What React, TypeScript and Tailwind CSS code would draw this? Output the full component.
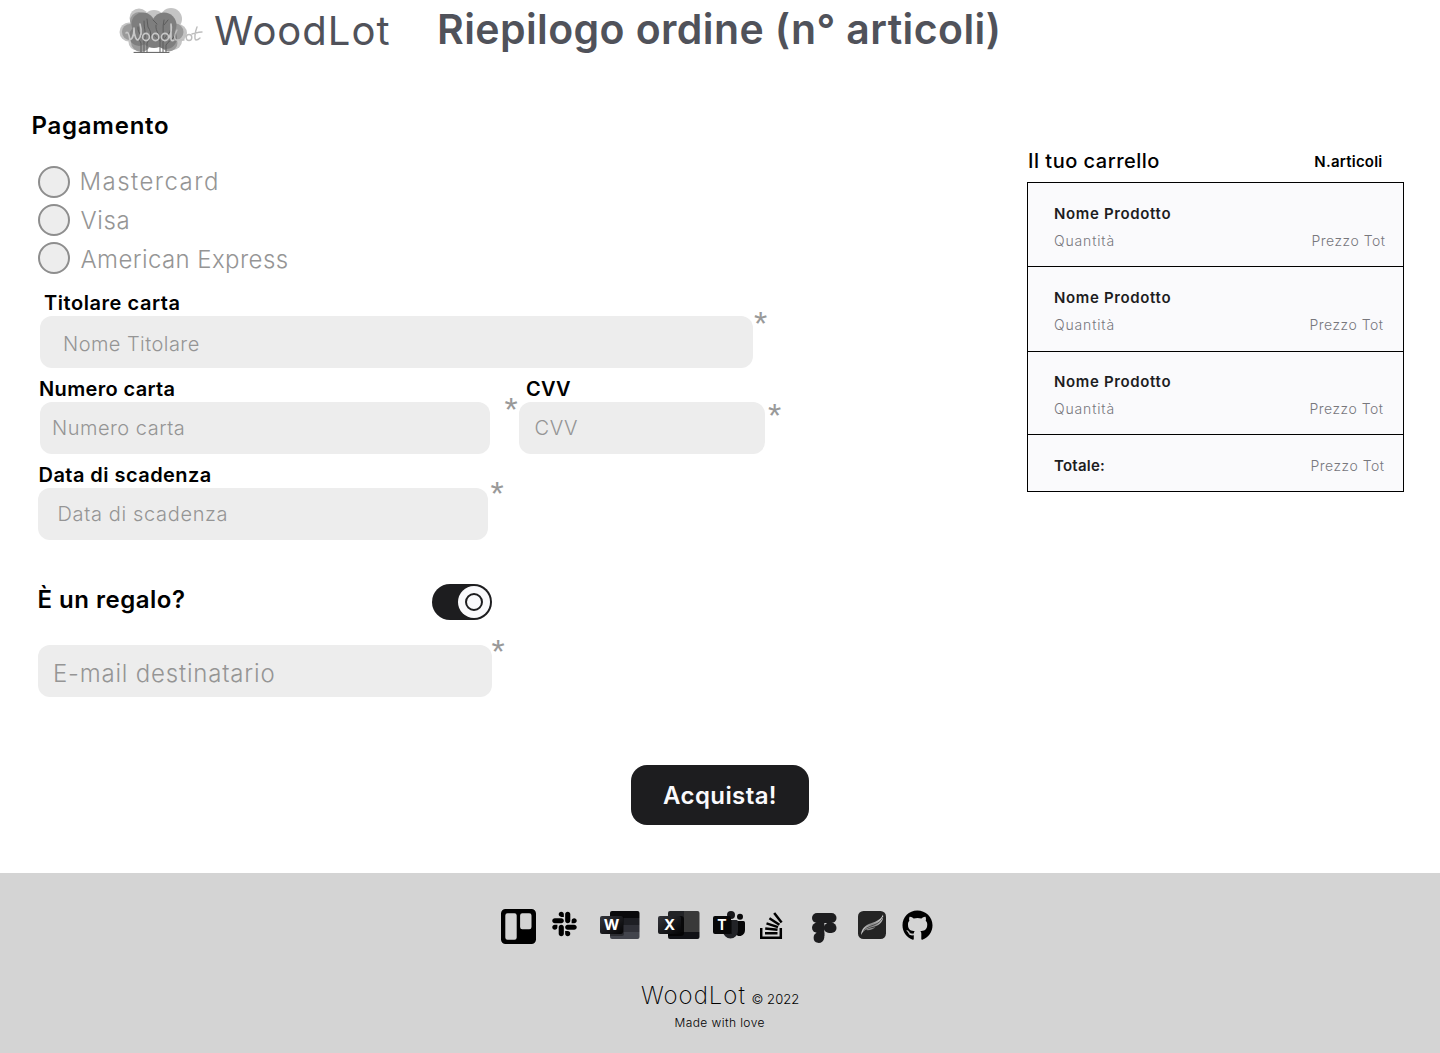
import type { ReactNode } from "react";
import { FaGithub, FaSlack } from "react-icons/fa";

function TreeLogo() {
  return (
    <svg width="90" height="52" viewBox="0 0 90 52" className="shrink-0">
      <g fill="#c4c4c4">
        <circle cx="22" cy="13" r="9.5" />
        <circle cx="54" cy="14" r="11" />
        <circle cx="12" cy="27" r="9.5" />
        <circle cx="61" cy="28" r="9" />
        <circle cx="20" cy="37" r="8.5" />
        <circle cx="56" cy="36" r="9" />
        <circle cx="37" cy="16" r="11" />
      </g>
      <g fill="#9a9a9a">
        <circle cx="13" cy="27" r="8" />
        <circle cx="22" cy="16" r="9" />
        <circle cx="58" cy="27" r="8.5" />
        <circle cx="24" cy="37" r="10" />
        <circle cx="52" cy="38" r="8.5" />
      </g>
      <g fill="#7e7e7e">
        <circle cx="26" cy="19" r="11.5" />
        <circle cx="47" cy="20" r="12.5" />
        <circle cx="22" cy="31" r="10" />
        <circle cx="37" cy="29" r="14" />
        <circle cx="49" cy="33" r="11" />
      </g>
      <g fill="none" stroke="#5c5c5c" strokeWidth="1" strokeLinecap="round">
        <path d="M27 47V36C27 31 20 29 21 22M27 36C30 30 27 25 27 16M24 47V38C23 34 18 33 16 29M30 47V38C33 34 36 29 31 22L30 14" />
        <path d="M43 47V36C44 30 38 27 39 20M46 47V37C48 31 54 29 54 22M49 47V40C51 36 56 35 58 30M43 36C41 33 38 32 37 29M46 34C47 28 45 23 47 15M40 19L36 15M47 20L51 15" />
        <path d="M17 47.4H52" />
      </g>
      <g fill="none" stroke="#c8c8c8" strokeWidth="1.6" strokeLinecap="round" strokeLinejoin="round">
        <path d="M9 28C11 26 12 29 13 35C16 34 17 27 17 23C17 30 19 35 21 35C24 32 25 26 23 19" />
        <ellipse cx="29" cy="32" rx="3.4" ry="3.600" />
        <ellipse cx="38.500" cy="32" rx="3.400" ry="3.600" />
        <ellipse cx="48" cy="32" rx="3.600" ry="3.600" />
        <path d="M52 33C54 29 55 24 54 19V34C54 36 56 36 57 35" />
      </g>
      <g fill="none" stroke="#bdbdbd" strokeWidth="1.4" strokeLinecap="round">
        <path d="M60 25C57 30 57 34 59 35H67" />
        <ellipse cx="72" cy="32.500" rx="2.800" ry="3" />
        <path d="M80 22C78 27 77 35 79 35C81 35 82 34 83 33M75 29C79 28 82 27 85 27" />
      </g>
    </svg>
  );
}

function TrelloIcon() {
  return (
    <svg width="35" height="35" viewBox="0 0 35 35">
      <path
        fillRule="evenodd"
        d="M4.5 0h26A4.5 4.5 0 0 1 35 4.500v26a4.500 4.500 0 0 1-4.500 4.500h-26A4.500 4.500 0 0 1 0 30.500v-26A4.500 4.500 0 0 1 4.500 0zM6.500 4.300a2.200 2.200 0 0 0-2.200 2.200v22a2.200 2.200 0 0 0 2.200 2.200h7a2.200 2.200 0 0 0 2.200-2.200v-22a2.200 2.200 0 0 0-2.200-2.200zM21.300 4.300a2.200 2.200 0 0 0-2.200 2.200v11.500a2.200 2.200 0 0 0 2.200 2.200h7a2.200 2.200 0 0 0 2.200-2.200V6.500a2.200 2.200 0 0 0-2.200-2.200z"
      />
    </svg>
  );
}

function Tile({ letter }: { letter: string }) {
  return (
    <span className="absolute left-0 top-[5px] flex h-[18px] w-[23px] items-center justify-center rounded-[2px] bg-linear-to-br from-[#34353b] to-[#050506] pb-px text-[15px] leading-none font-bold text-white">
      {letter}
    </span>
  );
}

function WordIcon() {
  return (
    <div className="relative h-7 w-10">
      <svg width="40" height="28" viewBox="0 0 40 28">
        <path d="M12 0h25.500a2 2 0 0 1 2 2v5H10V2a2 2 0 0 1 2-2z" fill="#09090b" />
        <path d="M10 7h29.500v7H10z" fill="#1e1f24" />
        <path d="M10 14h29.500v7H10z" fill="#303138" />
        <path d="M10 21h29.500v5a2 2 0 0 1-2 2H12a2 2 0 0 1-2-2z" fill="#42444c" />
        <path d="M10 5h12a2 2 0 0 1 2 2v16a2 2 0 0 1-2 2H10z" fill="#000" opacity=".35" />
      </svg>
      <Tile letter="W" />
    </div>
  );
}

function ExcelIcon() {
  return (
    <div className="relative h-7 w-[42px]">
      <svg width="42" height="28" viewBox="0 0 42 28">
        <path d="M12 0h14v21H10V2a2 2 0 0 1 2-2z" fill="#222326" />
        <path d="M26 0h13.500a2 2 0 0 1 2 2v19H26z" fill="#3a3a3a" />
        <path d="M10 21h31.500v5a2 2 0 0 1-2 2H12a2 2 0 0 1-2-2z" fill="#111216" />
        <path d="M10 5h13a3 3 0 0 1 3 3v14a3 3 0 0 1-3 3H10z" fill="#000" opacity=".75" />
      </svg>
      <Tile letter="X" />
    </div>
  );
}

function TeamsIcon() {
  return (
    <div className="relative h-7 w-8">
      <svg width="32" height="28" viewBox="0 0 32 28">
        <circle cx="18" cy="4" r="4" fill="#17171a" />
        <circle cx="27" cy="5.800" r="3" fill="#09090a" />
        <path d="M21 10h9.500a1.500 1.500 0 0 1 1.500 1.500V19c0 3.500-2.500 6-5.500 6S21 22.500 21 19z" fill="#060607" />
        <path d="M10 9h13.500a1.500 1.500 0 0 1 1.500 1.500V20a7.500 7.500 0 0 1-15 0z" fill="#222327" />
        <path d="M10 9h9v14h-9z" fill="#000" opacity=".45" />
      </svg>
      <span className="absolute left-0 top-[5px] flex h-[18px] w-[18px] items-center justify-center rounded-[2px] bg-[#070708] pb-px text-sm leading-none font-bold text-white">
        T
      </span>
    </div>
  );
}

function StackIcon() {
  return (
    <svg width="23" height="28" viewBox="0 0 23 28" fill="none" stroke="#000" strokeWidth="2.500">
      <path d="M1.200 17v9.700h19.600V17" />
      <path d="M5 22.300h12.500M5.200 17.400l12.300 1.400M6.500 12.400l11.500 3.700M9.400 7.200l10 6.500M14.200 1.900l7.400 9.600" />
    </svg>
  );
}

function FigmaIcon() {
  return (
    <svg width="25" height="31" viewBox="0 0 25 31" fill="#1d1d1f">
      <rect x="0" y="0" width="24.500" height="10" rx="5" />
      <rect x="0" y="9.800" width="13" height="10" rx="5" />
      <rect x="12" y="9.800" width="12.500" height="10.200" rx="5.100" />
      <path d="M5.800 19.600h6.500v5a5.600 5.600 0 0 1-6.500 5.200 5.200 5.200 0 0 1 0-10.200z" />
      <path d="M8 7h4.300v16H8zM4.500 8.500h6v2.500h-6zM4.500 18.500h6V21h-6z" />
    </svg>
  );
}

function FeatherIcon() {
  return (
    <svg width="28" height="28" viewBox="0 0 28 28">
      <defs>
        <linearGradient id="wing" x1="0" y1="1" x2="1" y2="0">
          <stop offset="0" stopColor="#e0e0e0" />
          <stop offset=".5" stopColor="#8a8a8a" />
          <stop offset="1" stopColor="#e6e6e6" />
        </linearGradient>
      </defs>
      <rect width="28" height="28" rx="5.500" fill="#242424" />
      <path d="M3 24C3.500 17.500 7 14.500 13 12.300C19 10.200 23.500 8 25 3.500C26 9.500 22.500 14 16 15.700C10.500 17 5.500 18.500 3 24Z" fill="url(#wing)" />
      <path d="M5.500 19.500C9 15.500 15 14.800 19 12.600C22 11 24 8.500 24.800 6" stroke="#2c2c2c" strokeWidth=".7" fill="none" />
      <path d="M7.500 19C11.500 19.600 15.500 18.500 17.500 16C14 17 10.500 17.300 7.500 19Z" fill="#8c8c8c" />
    </svg>
  );
}

function Star({ className }: { className: string }) {
  return (
    <span className={`absolute font-['Liberation_Sans'] text-[34px] leading-[34px] text-[#999999] ${className}`}>*</span>
  );
}

function Label({ className = "", children }: { className?: string; children: ReactNode }) {
  return <div className={`mb-px text-xl leading-6 font-semibold whitespace-nowrap text-black ${className}`}>{children}</div>;
}

function Field({ className, children }: { className: string; children: ReactNode }) {
  return (
    <div className={`relative h-[52px] rounded-xl bg-[#ededed] font-light whitespace-nowrap text-[#959595] ${className}`}>
      {children}
    </div>
  );
}

const cards = [
  { name: "Mastercard", style: "tracking-[1.45px] pl-[9.500px]" },
  { name: "Visa", style: "tracking-[0.6px] pl-[10.500px] pt-px" },
  { name: "American Express", style: "tracking-[0.4px] pl-[10.500px] pt-[3px]" },
];

const products = [
  { style: "h-[84px] pt-[21px]", price: "pr-[17.500px]" },
  { style: "h-[85px] pt-[21px]", price: "pr-[19.500px]" },
  { style: "h-[83px] pt-5", price: "pr-[19.500px]" },
];

export default function App() {
  return (
    <div className="h-[1053px] w-[1440px] overflow-hidden bg-white font-['Inter',sans-serif]">
      <header className="flex h-[88px] items-start pl-[117px] whitespace-nowrap text-[#50525a]">
        <div className="pt-[5px]">
          <TreeLogo />
        </div>
        <div className="w-[230px] pt-[11px] pl-[7px] text-[40px] leading-10 tracking-[1px]">WoodLot</div>
        <h1 className="pt-[9px] text-[41px] leading-10 font-semibold tracking-[0.4px]">
          Riepilogo ordine (n° articoli)
        </h1>
      </header>

      <main className="flex h-[609px]">
        <section className="w-[1027px] pl-[38px]">
          <h2 className="-ml-[6.500px] pt-[26px] text-2xl leading-6 font-semibold tracking-[0.75px]">Pagamento</h2>

          <div className="mt-7 flex flex-col gap-1.5">
            {cards.map((card) => (
              <label key={card.name} className="flex h-8 items-center">
                <span className="size-8 shrink-0 rounded-full border-2 border-[#8e8e8e] bg-[#ededed]" />
                <span className={`text-2xl leading-8 font-light whitespace-nowrap text-[#959595] ${card.style}`}>
                  {card.name}
                </span>
              </label>
            ))}
          </div>

          <div className="mt-[17px]">
            <Label className="pl-[6px] tracking-[0.55px]">Titolare carta</Label>
            <Field className="ml-[2px] w-[713px] pl-[23px] text-xl leading-[56px] tracking-[0.45px]">
              Nome Titolare
              <Star className="-top-[10px] left-[714px]" />
            </Field>
          </div>

          <div className="mt-[9px] flex">
            <div className="w-[481px]">
              <Label className="pl-[1px] tracking-[0.35px]">Numero carta</Label>
              <Field className="ml-[2px] w-[450px] pl-[12px] text-xl leading-[52px] tracking-[0.5px]">
                Numero carta
                <Star className="-top-[10px] left-[464.500px]" />
              </Field>
            </div>
            <div>
              <Label className="pl-[7px] tracking-[0.2px]">CVV</Label>
              <Field className="w-[246px] pl-[15.500px] text-xl leading-[52px] tracking-[0.6px]">
                CVV
                <Star className="-top-[4px] left-[249px]" />
              </Field>
            </div>
          </div>

          <div className="mt-[9px]">
            <Label className="pl-[0.5px] tracking-[0.45px]">Data di scadenza</Label>
            <Field className="w-[450px] pl-[19.500px] text-xl leading-[52px] tracking-[0.65px]">
              Data di scadenza
              <Star className="-top-[12px] left-[452.500px]" />
            </Field>
          </div>

          <div className="mt-11 flex h-9 w-[454px] items-center justify-between">
            <h2 className="-ml-[0.5px] pb-[5px] text-2xl leading-6 font-semibold tracking-[0.5px]">È un regalo?</h2>
            <div className="flex h-9 w-[60px] items-center justify-end rounded-full bg-[#1d1d1f] pr-[2px]">
              <div className="flex size-8 items-center justify-center rounded-full bg-[#fafafc]">
                <div className="size-[18px] rounded-full border-2 border-[#1d1d1f]" />
              </div>
            </div>
          </div>

          <Field className="mt-[25px] w-[454px] pl-[15px] text-2xl leading-[57px] tracking-[0.8px]">
            E-mail destinatario
            <Star className="-top-[11px] left-[453.500px]" />
          </Field>
        </section>

        <aside className="w-[377px] pt-[61px]">
          <div className="mb-[9px] flex h-6 items-center justify-between pr-[21.500px] pl-[1px] whitespace-nowrap">
            <h2 className="text-xl leading-6 font-medium tracking-[0.5px]">Il tuo carrello</h2>
            <span className="pt-0.5 text-[15px] leading-5 font-semibold tracking-[0.22px]">N.articoli</span>
          </div>
          <div className="h-[310px] border border-black bg-[#fafafc] whitespace-nowrap text-[#1d1d1f]">
            {products.map((product, index) => (
              <div key={index} className={`border-b border-black pl-[26px] ${product.style}`}>
                <div className="text-[15px] leading-5 font-semibold tracking-[0.65px]">Nome Prodotto</div>
                <div className={`mt-[7px] flex justify-between text-sm leading-5 font-light text-[#77777c] ${product.price}`}>
                  <span className="tracking-[0.85px]">Quantità</span>
                  <span className="tracking-[0.5px]">Prezzo Tot</span>
                </div>
              </div>
            ))}
            <div className="flex h-14 justify-between pt-[21px] pr-[18.500px] pl-[26px] leading-5">
              <span className="text-[15px] font-semibold tracking-[0.23px]">Totale:</span>
              <span className="text-sm leading-5 font-light tracking-[0.5px] text-[#77777c]">Prezzo Tot</span>
            </div>
          </div>
        </aside>
      </main>

      <div className="flex h-44 justify-center pt-[68px]">
        <button className="h-[60px] w-[178px] rounded-2xl bg-[#1d1d1f] pt-0.5 text-2xl font-semibold tracking-[0.4px] text-[#fafafc]">
          Acquista!
        </button>
      </div>

      <footer className="h-[180px] bg-[#d4d4d4] pt-9">
        <div className="flex h-9 items-start pl-[501px]">
          <TrelloIcon />
          <FaSlack className="mt-[1px] ml-[13px] h-[28px] w-[31px]" />
          <div className="mt-[2px] ml-[20px]"><WordIcon /></div>
          <div className="mt-[2px] ml-[18px]"><ExcelIcon /></div>
          <div className="mt-[2px] ml-[13px]"><TeamsIcon /></div>
          <div className="mt-[2px] ml-[15px]"><StackIcon /></div>
          <div className="mt-[4px] ml-[29px]"><FigmaIcon /></div>
          <div className="mt-[2px] ml-[21px]"><FeatherIcon /></div>
          <FaGithub className="mt-[1px] ml-[16px] size-[31px]" />
        </div>
        <div className="mt-[39px] flex h-6 items-start pl-[641px] whitespace-nowrap">
          <span className="text-2xl leading-6 font-extralight tracking-[1px]">WoodLot</span>
          <span className="ml-[5.500px] pt-[3px] text-[13px] leading-6 font-light tracking-[0.09px]">© 2022</span>
        </div>
        <div className="mt-[3px] pl-[674.500px] text-xs leading-6 font-light tracking-[0.41px]">Made with love</div>
      </footer>
    </div>
  );
}
